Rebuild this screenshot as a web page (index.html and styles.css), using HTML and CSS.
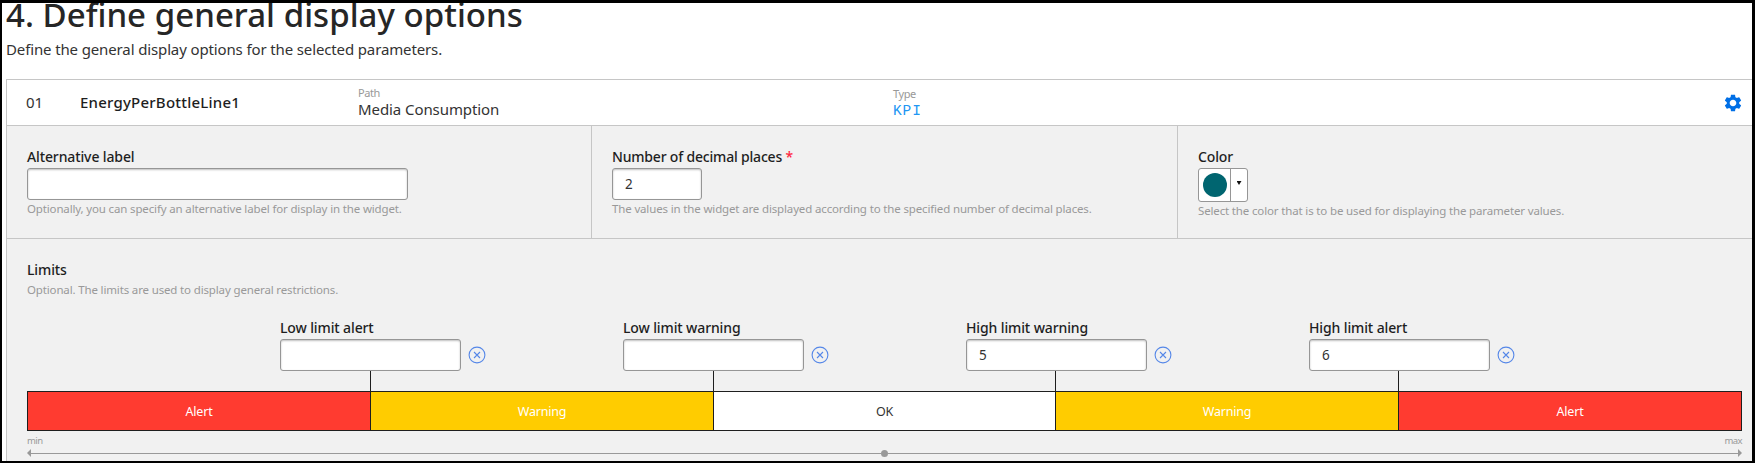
FILE: index.html
```html
<!DOCTYPE html>
<html lang="en">
<head>
<meta charset="utf-8">
<title>Define general display options</title>
<link rel="stylesheet" href="styles.css">
</head>
<body>
<main class="frame">
  <h1 class="title">4. Define general display options</h1>
  <p class="subtitle">Define the general display options for the selected parameters.</p>
  <section class="card">
    <header class="card-header">
      <span class="index">01</span>
      <span class="name">EnergyPerBottleLine1</span>
      <div class="meta path"><span class="meta-label">Path</span><span class="meta-value">Media Consumption</span></div>
      <div class="meta type"><span class="meta-label">Type</span><span class="kpi">KPI</span></div>
      <svg class="gear" width="20" height="20" viewBox="0 0 24 24"><path fill="#006fe6" d="M19.43 12.98c.04-.32.07-.64.07-.98s-.03-.66-.07-.98l2.11-1.65c.19-.15.24-.42.12-.64l-2-3.46c-.12-.22-.39-.3-.61-.22l-2.49 1c-.52-.4-1.08-.73-1.69-.98l-.38-2.65C14.46 2.18 14.25 2 14 2h-4c-.25 0-.46.18-.49.42l-.38 2.65c-.61.25-1.17.59-1.69.98l-2.49-1c-.23-.09-.49 0-.61.22l-2 3.46c-.13.22-.07.49.12.64l2.11 1.65c-.04.32-.07.65-.07.98s.03.66.07.98l-2.11 1.65c-.19.15-.24.42-.12.64l2 3.46c.12.22.39.3.61.22l2.49-1c.52.4 1.08.73 1.69.98l.38 2.65c.03.24.24.42.49.42h4c.25 0 .46-.18.49-.42l.38-2.65c.61-.25 1.17-.59 1.69-.98l2.49 1c.23.09.49 0 .61-.22l2-3.46c.12-.22.07-.49-.12-.64l-2.11-1.65zM12 16c-2.21 0-4-1.79-4-4s1.79-4 4-4 4 1.79 4 4-1.79 4-4 4z"/></svg>
    </header>
    <div class="options">
      <div class="option">
        <label class="label">Alternative label</label>
        <input class="field wide" type="text">
        <p class="help">Optionally, you can specify an alternative label for display in the widget.</p>
      </div>
      <div class="option">
        <label class="label places">Number of decimal places <span class="required">*</span></label>
        <input class="field short" type="text" value="2">
        <p class="help">The values in the widget are displayed according to the specified number of decimal places.</p>
      </div>
      <div class="option">
        <label class="label">Color</label>
        <div class="picker">
          <span class="swatch-box"><span class="swatch"></span></span>
          <span class="caret-box"><span class="caret"></span></span>
        </div>
        <p class="help">Select the color that is to be used for displaying the parameter values.</p>
      </div>
    </div>
    <div class="limits">
      <h2 class="label limits-title">Limits</h2>
      <p class="help">Optional. The limits are used to display general restrictions.</p>
      <div class="limit-row">
        <div class="limit">
          <label class="label">Low limit alert</label>
          <div class="limit-input"><input class="field" type="text"><svg class="clear" width="18" height="18" viewBox="0 0 18 18"><circle cx="9" cy="9" r="7.9"/><path d="M6 6l6 6M12 6l-6 6"/></svg></div>
          <div class="stem"></div>
        </div>
        <div class="limit">
          <label class="label">Low limit warning</label>
          <div class="limit-input"><input class="field" type="text"><svg class="clear" width="18" height="18" viewBox="0 0 18 18"><circle cx="9" cy="9" r="7.9"/><path d="M6 6l6 6M12 6l-6 6"/></svg></div>
          <div class="stem"></div>
        </div>
        <div class="limit high">
          <label class="label">High limit warning</label>
          <div class="limit-input"><input class="field" type="text" value="5"><svg class="clear" width="18" height="18" viewBox="0 0 18 18"><circle cx="9" cy="9" r="7.9"/><path d="M6 6l6 6M12 6l-6 6"/></svg></div>
          <div class="stem"></div>
        </div>
        <div class="limit high">
          <label class="label">High limit alert</label>
          <div class="limit-input"><input class="field" type="text" value="6"><svg class="clear" width="18" height="18" viewBox="0 0 18 18"><circle cx="9" cy="9" r="7.9"/><path d="M6 6l6 6M12 6l-6 6"/></svg></div>
          <div class="stem"></div>
        </div>
      </div>
      <div class="bar">
        <div class="zone alert">Alert</div>
        <div class="zone warning">Warning</div>
        <div class="zone ok">OK</div>
        <div class="zone warning">Warning</div>
        <div class="zone alert">Alert</div>
      </div>
      <div class="ends"><span>min</span><span>max</span></div>
      <div class="axis"><span class="arrow left"></span><span class="line"></span><span class="dot"></span><span class="line"></span><span class="arrow right"></span></div>
    </div>
  </section>
</main>
</body>
</html>
```
FILE: styles.css
```css
* { box-sizing: border-box; }
body { margin: 0; background: #fff; color: #1e1e1e; font-family: "Noto Sans", sans-serif; }
h1, h2, p { margin: 0; }
.frame { height: 463px; overflow: hidden; border: solid #000; border-width: 3px 3px 2px 2px; padding-left: 4px; }
.title { margin-top: -8px; font-size: 33px; line-height: 40px; font-weight: 500; letter-spacing: .03px; color: #262626; white-space: nowrap; }
.subtitle { margin-top: 2px; font-size: 15px; line-height: 24px; letter-spacing: -.13px; color: #333; }
.card { margin-top: 18px; height: 400px; border: solid #c6c6c6; border-width: 1px 0 0 1px; background: #f1f1f1; }
.card-header { display: flex; height: 46px; background: #fff; border-bottom: 1px solid #c6c6c6; font-size: 15px; line-height: 20px; padding: 0 9px 0 19px; }
.index { width: 54px; padding-top: 12px; color: #333; }
.name { width: 278px; padding-top: 12px; font-weight: 500; letter-spacing: .22px; }
.meta { display: flex; flex-direction: column; align-items: flex-start; padding-top: 6px; }
.path { width: 535px; }
.type { padding-top: 7px; }
.meta-label { font-size: 11px; line-height: 14px; letter-spacing: -.4px; color: #999; }
.meta-value { font-size: 15px; line-height: 20px; margin-top: -1px; letter-spacing: -.08px; color: #333; }
.kpi { margin-top: 2px; font-family: "Liberation Mono", monospace; font-size: 14.5px; line-height: 16px; letter-spacing: .9px; color: #2196f3; }
.gear { margin: 13px 0 0 auto; }
.options { display: grid; grid-template-columns: 585px 586px 1fr; height: 113px; border-bottom: 1px solid #c6c6c6; }
.option { padding: 21px 0 0 20px; border-right: 1px solid #c6c6c6; }
.option:last-child { border-right: 0; }
.label { display: block; height: 21px; font-size: 14px; line-height: 20px; font-weight: 500; letter-spacing: -.12px; white-space: nowrap; }
.places { letter-spacing: -.19px; }
.required { color: #ff2640; }
.field { display: block; width: 181px; height: 32px; padding: 0 12px; border: 1px solid #969696; border-radius: 3px; background: #fff; box-shadow: inset 0 1px 2px rgba(0,0,0,.25); font: 400 13.5px/20px "Noto Sans", sans-serif; color: #333; outline: 0; }
.wide { width: 381px; }
.short { width: 90px; }
.help { padding-top: 1px; font-size: 11.5px; line-height: 16px; letter-spacing: -.15px; color: #999; white-space: nowrap; }
.picker { display: flex; width: 50px; height: 34px; border: 1px solid #969696; border-radius: 3px; background: #fff; }
.swatch-box { display: flex; align-items: center; justify-content: center; width: 32px; border-right: 1px solid #969696; }
.swatch { width: 24px; height: 24px; border-radius: 50%; background: #006570; }
.caret-box { flex: 1; display: flex; justify-content: center; padding-top: 12px; }
.caret { width: 5px; height: 4px; background: #111; clip-path: polygon(0 0, 100% 0, 50% 100%); }
.limits { padding: 21px 10px 0 20px; }
.limits-title { height: 21px; }
.limit-row { display: grid; grid-template-columns: repeat(4, 343px); margin-top: 20px; padding-left: 253px; }
.limit-input { display: flex; align-items: center; gap: 6.5px; }
.clear { fill: none; stroke: #5587e8; stroke-width: 1.1; }
.stem { width: 1px; height: 20px; margin-left: 90px; background: #1e1e1e; }
.high .stem { margin-left: 89px; }
.bar { display: grid; grid-template-columns: 343px 343px 342px 343px 1fr; height: 40px; border: 1px solid #1e1e1e; }
.zone { display: flex; align-items: center; justify-content: center; padding-top: 1px; font-size: 12.5px; line-height: 18px; letter-spacing: -.2px; color: #fff; border-right: 1px solid #1e1e1e; }
.zone:last-child { border-right: 0; }
.alert { background: #ff3b30; }
.warning { background: #fc0; }
.ok { background: #fff; color: #333; }
.ends { display: flex; justify-content: space-between; margin-top: 4px; font-size: 9.5px; line-height: 12px; letter-spacing: -.6px; color: #999; }
.axis { display: flex; align-items: center; height: 8px; margin-top: 2px; }
.line { flex: 1; height: 1px; background: #999; }
.dot { width: 7px; height: 7px; border-radius: 50%; background: #999; }
.arrow { width: 4px; height: 8px; background: #999; }
.left { clip-path: polygon(100% 0, 100% 100%, 0 50%); }
.right { clip-path: polygon(0 0, 0 100%, 100% 50%); }
```
